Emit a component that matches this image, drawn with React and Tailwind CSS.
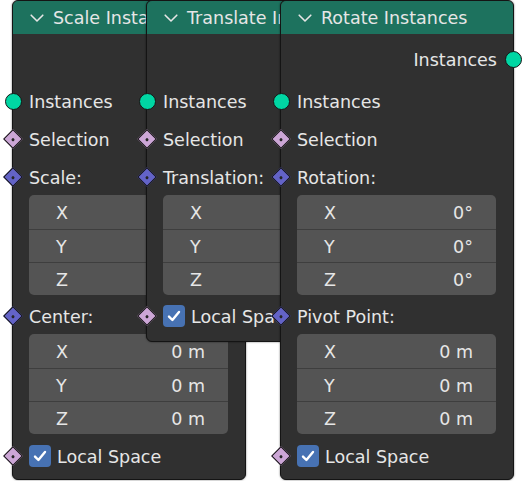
import React from "react";

function Chevron() {
  return (
    <svg width="14" height="10" viewBox="0 0 14 10" className="shrink-0">
      <polyline points="1.2,2.2 7,8 12.8,2.2" fill="none" stroke="#e6e6e6" strokeWidth="1.6" strokeLinecap="round" strokeLinejoin="round" />
    </svg>
  );
}

function Socket({ type, side = "left" }) {
  const pos = side === "left" ? "left-[-10px]" : "right-[-10px]";
  return (
    <div className={`absolute ${pos} top-1/2 flex h-[20px] w-[20px] -translate-y-1/2 items-center justify-center`}>
      {type === "geo" && (
        <div className="h-[17px] w-[17px] rounded-full border border-[#151515] bg-[#00d6a3]" />
      )}
      {type === "bool" && (
        <div className="flex h-[14px] w-[14px] rotate-45 items-center justify-center border border-[#151515] bg-[#cca6d6]">
          <div className="h-[3px] w-[3px] rounded-full bg-[#262626]" />
        </div>
      )}
      {type === "vec" && (
        <div className="flex h-[14px] w-[14px] rotate-45 items-center justify-center border border-[#151515] bg-[#6363c7]">
          <div className="h-[3px] w-[3px] rounded-full bg-[#262626]" />
        </div>
      )}
    </div>
  );
}

function Row({ socket, label, className = "h-[38px]" }) {
  return (
    <div className={`relative flex items-center pl-[16px] ${className}`}>
      {socket && <Socket type={socket} />}
      <span className="pt-[4px]">{label}</span>
    </div>
  );
}

function OutputRow() {
  return (
    <div className="relative mt-[6px] flex h-[38px] items-center justify-end pr-[16px]">
      <span className="pt-[4px]">Instances</span>
      <Socket type="geo" side="right" />
    </div>
  );
}

function VecBox({ values }) {
  const labels = ["X", "Y", "Z"];
  return (
    <div className="ml-[16px] mr-[17px] flex flex-col overflow-hidden rounded-[5px] bg-[#545454]">
      {labels.map((l, i) => (
        <div
          key={l}
          className={
            i === 0
              ? "flex h-[34px] items-center justify-between pl-[27px] pr-[23px] pt-[3px]"
              : "flex h-[33px] items-center justify-between border-t border-[#3e3e3e] pl-[27px] pr-[23px] pt-[3px]"
          }
        >
          <span>{l}</span>
          {values && <span>{values[i]}</span>}
        </div>
      ))}
    </div>
  );
}

function Checkbox({ label, className }) {
  return (
    <div className={`relative flex items-center gap-[6px] pl-[16px] ${className}`}>
      <Socket type="bool" />
      <div className="flex h-[22px] w-[22px] items-center justify-center rounded-[4px] bg-[#4772b3]">
        <svg width="16" height="16" viewBox="0 0 16 16">
          <path d="M3 8.6 L6.4 12 L13 4" fill="none" stroke="#ffffff" strokeWidth="2.4" strokeLinecap="round" strokeLinejoin="round" />
        </svg>
      </div>
      <span className="pt-[4px]">{label}</span>
    </div>
  );
}

function Node({ title, className, children }) {
  return (
    <div className={`absolute top-0 flex w-[234px] flex-col rounded-[6px] border border-[#141414] bg-[#303030] shadow-[0_0_2px_rgba(0,0,0,0.6)] ${className}`}>
      <div className="flex h-[33px] items-center gap-[9px] overflow-hidden whitespace-nowrap rounded-t-[5px] bg-[#1d725e] pl-[17px]">
        <Chevron />
        <span className="pt-[3px]">{title}</span>
      </div>
      {children}
    </div>
  );
}

export default function App() {
  const zeroM = ["0 m", "0 m", "0 m"];
  const zeroD = ["0°", "0°", "0°"];
  return (
    <div className="relative h-[481px] w-[524px] overflow-hidden bg-white font-['DejaVu_Sans',sans-serif] text-[17.5px] leading-none text-[#e6e6e6]">
      <Node title="Scale Instances" className="left-[12px] z-10 pb-[4px]">
        <OutputRow />
        <Row socket="geo" label="Instances" className="mt-[4px] h-[38px]" />
        <Row socket="bool" label="Selection" />
        <Row socket="vec" label="Scale:" className="h-[37px]" />
        <VecBox values={null} />
        <Row socket="vec" label="Center:" className="mt-[3px] h-[36px]" />
        <VecBox values={zeroM} />
        <Checkbox label="Local Space" className="mt-[3px] h-[38px]" />
      </Node>

      <Node title="Translate Instances" className="left-[146px] z-20 pb-[7px]">
        <OutputRow />
        <Row socket="geo" label="Instances" className="mt-[4px] h-[38px]" />
        <Row socket="bool" label="Selection" />
        <Row socket="vec" label="Translation:" className="h-[37px]" />
        <VecBox values={null} />
        <Checkbox label="Local Space" className="mt-[3px] h-[36px]" />
      </Node>

      <Node title="Rotate Instances" className="left-[280px] z-30 pb-[4px]">
        <OutputRow />
        <Row socket="geo" label="Instances" className="mt-[4px] h-[38px]" />
        <Row socket="bool" label="Selection" />
        <Row socket="vec" label="Rotation:" className="h-[37px]" />
        <VecBox values={zeroD} />
        <Row socket="vec" label="Pivot Point:" className="mt-[3px] h-[36px]" />
        <VecBox values={zeroM} />
        <Checkbox label="Local Space" className="mt-[3px] h-[38px]" />
      </Node>
    </div>
  );
}
